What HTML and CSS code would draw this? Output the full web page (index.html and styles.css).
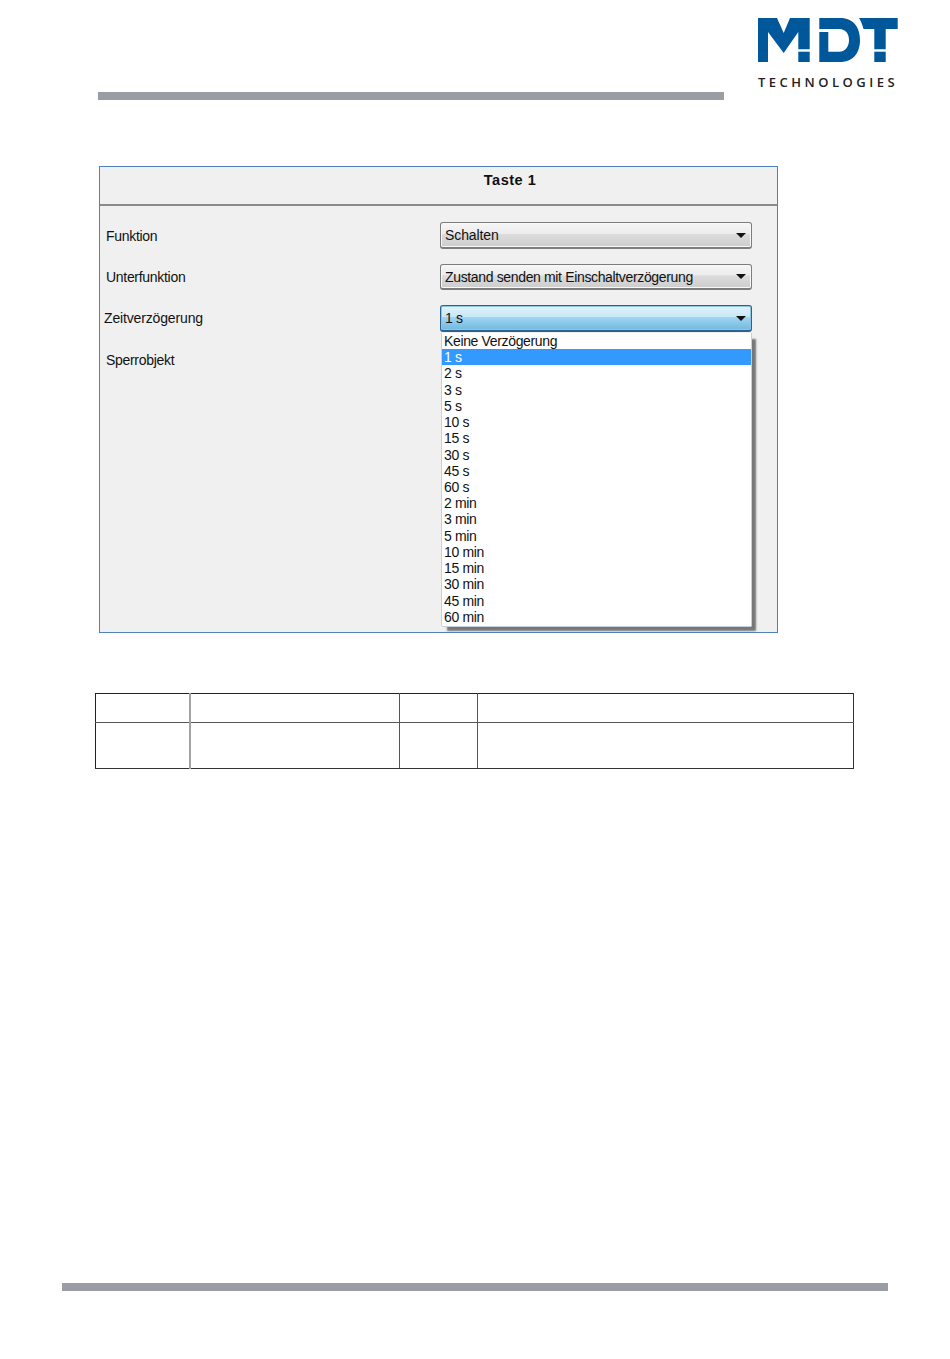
FILE: index.html
```html
<!DOCTYPE html>
<html lang="de">
<head>
<meta charset="utf-8">
<title>Taste 1</title>
<link rel="stylesheet" href="styles.css">
</head>
<body>
<div class="page">
  <header class="top">
    <div class="top-rule"></div>
    <div class="logo">
      <svg class="logo-mark" viewBox="0 0 141 44" width="141" height="44" aria-hidden="true">
        <path fill="#00589b" d="M0 0H19L25.700 15L32 0H51.700V31.300H40.300V14L25.700 35L10 14V44H0Z"/>
        <rect fill="#00589b" x="40.300" y="33.700" width="11.400" height="10.300"/>
        <path fill="#00589b" d="M61.300 0H82C96 0 102 10 102 22C102 34 96 44 82 44H61.300V14H70.300V33.700H81C88 33.700 91 28 91 22C91 16 88 11 81 11H61.300Z"/>
        <path fill="#00589b" d="M101 0H139.700V11H127.700V31.300H116.300V11H105.500C104.500 7 103 3 101 0Z"/>
        <rect fill="#00589b" x="116.300" y="33.700" width="11.400" height="10.300"/>
      </svg>
      <div class="logo-text">TECHNOLOGIES</div>
    </div>
  </header>

  <section class="panel">
    <h2 class="panel-title">Taste 1</h2>
    <div class="panel-body">
      <div class="labels">
        <div class="label">Funktion</div>
        <div class="label">Unterfunktion</div>
        <div class="label label-active">Zeitverzögerung</div>
        <div class="label">Sperrobjekt</div>
      </div>
      <div class="controls">
        <div class="select select-short"><span>Schalten</span><i class="arrow"></i></div>
        <div class="select"><span>Zustand senden mit Einschaltverzögerung</span><i class="arrow"></i></div>
        <div class="select select-open"><span>1 s</span><i class="arrow"></i></div>
        <ul class="menu">
          <li>Keine Verzögerung</li>
          <li class="selected">1 s</li>
          <li>2 s</li>
          <li>3 s</li>
          <li>5 s</li>
          <li>10 s</li>
          <li>15 s</li>
          <li>30 s</li>
          <li>45 s</li>
          <li>60 s</li>
          <li>2 min</li>
          <li>3 min</li>
          <li>5 min</li>
          <li>10 min</li>
          <li>15 min</li>
          <li>30 min</li>
          <li>45 min</li>
          <li>60 min</li>
        </ul>
      </div>
    </div>
  </section>

  <table class="grid">
    <colgroup>
      <col class="c1"><col class="c2"><col class="c3"><col class="c4">
    </colgroup>
    <tr class="r1"><td></td><td></td><td></td><td></td></tr>
    <tr class="r2"><td></td><td></td><td></td><td></td></tr>
  </table>

  <div class="foot-rule"></div>
</div>
</body>
</html>
```
FILE: styles.css
```css
* { box-sizing: border-box; }
html, body { margin: 0; padding: 0; background: #fff; }
.page { position: relative; width: 950px; height: 1359px; overflow: hidden; font-family: "Liberation Sans", Arial, sans-serif; color: #111; }
.top { height: 166px; padding: 92px 0 0 98px; }
.top-rule { width: 626px; height: 8px; background: #9a9da3; }
.logo { position: absolute; left: 758px; top: 18px; width: 141px; }
.logo-mark { display: block; }
.logo-text { margin-top: 13px; font-size: 13px; line-height: 14px; letter-spacing: 3.5px; color: #222; font-weight: 600; white-space: nowrap; font-family: "Open Sans", sans-serif; }
.panel { width: 679px; height: 467px; margin-left: 99px; background: #f0f0f0; border: 1px solid #4f81bd; }
.panel-title { margin: 0; height: 39px; padding: 4px 0 0 143px; border-bottom: 2px solid #8a8a8a; text-align: center; font-size: 14.5px; line-height: 18px; font-weight: 700; letter-spacing: .5px; }
.panel-body { display: flex; }
.labels { width: 340px; padding: 20px 0 0 6px; font-size: 14px; letter-spacing: -.3px; }
.label { height: 41.300px; line-height: 20px; }
.label-active { margin: -1px 0 1px -2px; letter-spacing: -.15px; }
.controls { width: 312px; padding-top: 16px; position: relative; font-size: 14px; letter-spacing: -.35px; }
.select { display: flex; align-items: center; justify-content: space-between; width: 312px; height: 26.500px; margin-bottom: 15px; padding: 1px 5px 0 4px; border: 1px solid #7c7c7c; border-bottom-width: 2px; border-radius: 3px; box-shadow: inset 0 0 0 1px #f8f8f8; background: linear-gradient(#f6f6f6, #ececec 45%, #dcdcdc 46%, #cdcdcd 100%); }
.select-short { letter-spacing: -.1px; }
.select-open { border-color: #2c628b; box-shadow: inset 0 0 0 1px #8ec6e6; background: linear-gradient(#e3f3fc, #c8e7f7 45%, #a2d6f1 46%, #6fb8e0 100%); margin-bottom: 0; }
.arrow { width: 0; height: 0; border-style: solid; border-width: 5px 5px 0; border-color: #111 transparent transparent; }
.menu { list-style: none; width: 311px; height: 294px; margin: 1.500px 0 0 1px; padding: 0; background: #fff; border: 1px solid #c8d0dc; border-top: 0; border-radius: 0 0 2px 2px; box-shadow: 5px 5px 2px -1px #777; line-height: 16.220px; }
.menu li { height: 16.220px; padding-left: 2px; }
.menu .selected { background: #3399ff; color: #fff; }
.grid { width: 758px; margin: 60px 0 0 95px; border-collapse: collapse; table-layout: fixed; border: 1px solid #222; }
.c1 { width: 94.500px; } .c2 { width: 209px; } .c3 { width: 78px; } .c4 { width: 376px; }
.grid td { border: 1px solid #555; padding: 0; }
.grid td:first-child { border-right: 2px solid #a3a3a3; border-left-color: #222; }
.grid td:last-child { border-right-color: #333; }
.grid .r1 td { border-top-color: #222; }
.grid .r2 td { border-bottom-color: #333; }
.grid .r1 { height: 29px; }
.grid .r2 { height: 46px; }
.foot-rule { position: absolute; left: 62px; top: 1283px; width: 826px; height: 8px; background: #9a9da3; }
```
